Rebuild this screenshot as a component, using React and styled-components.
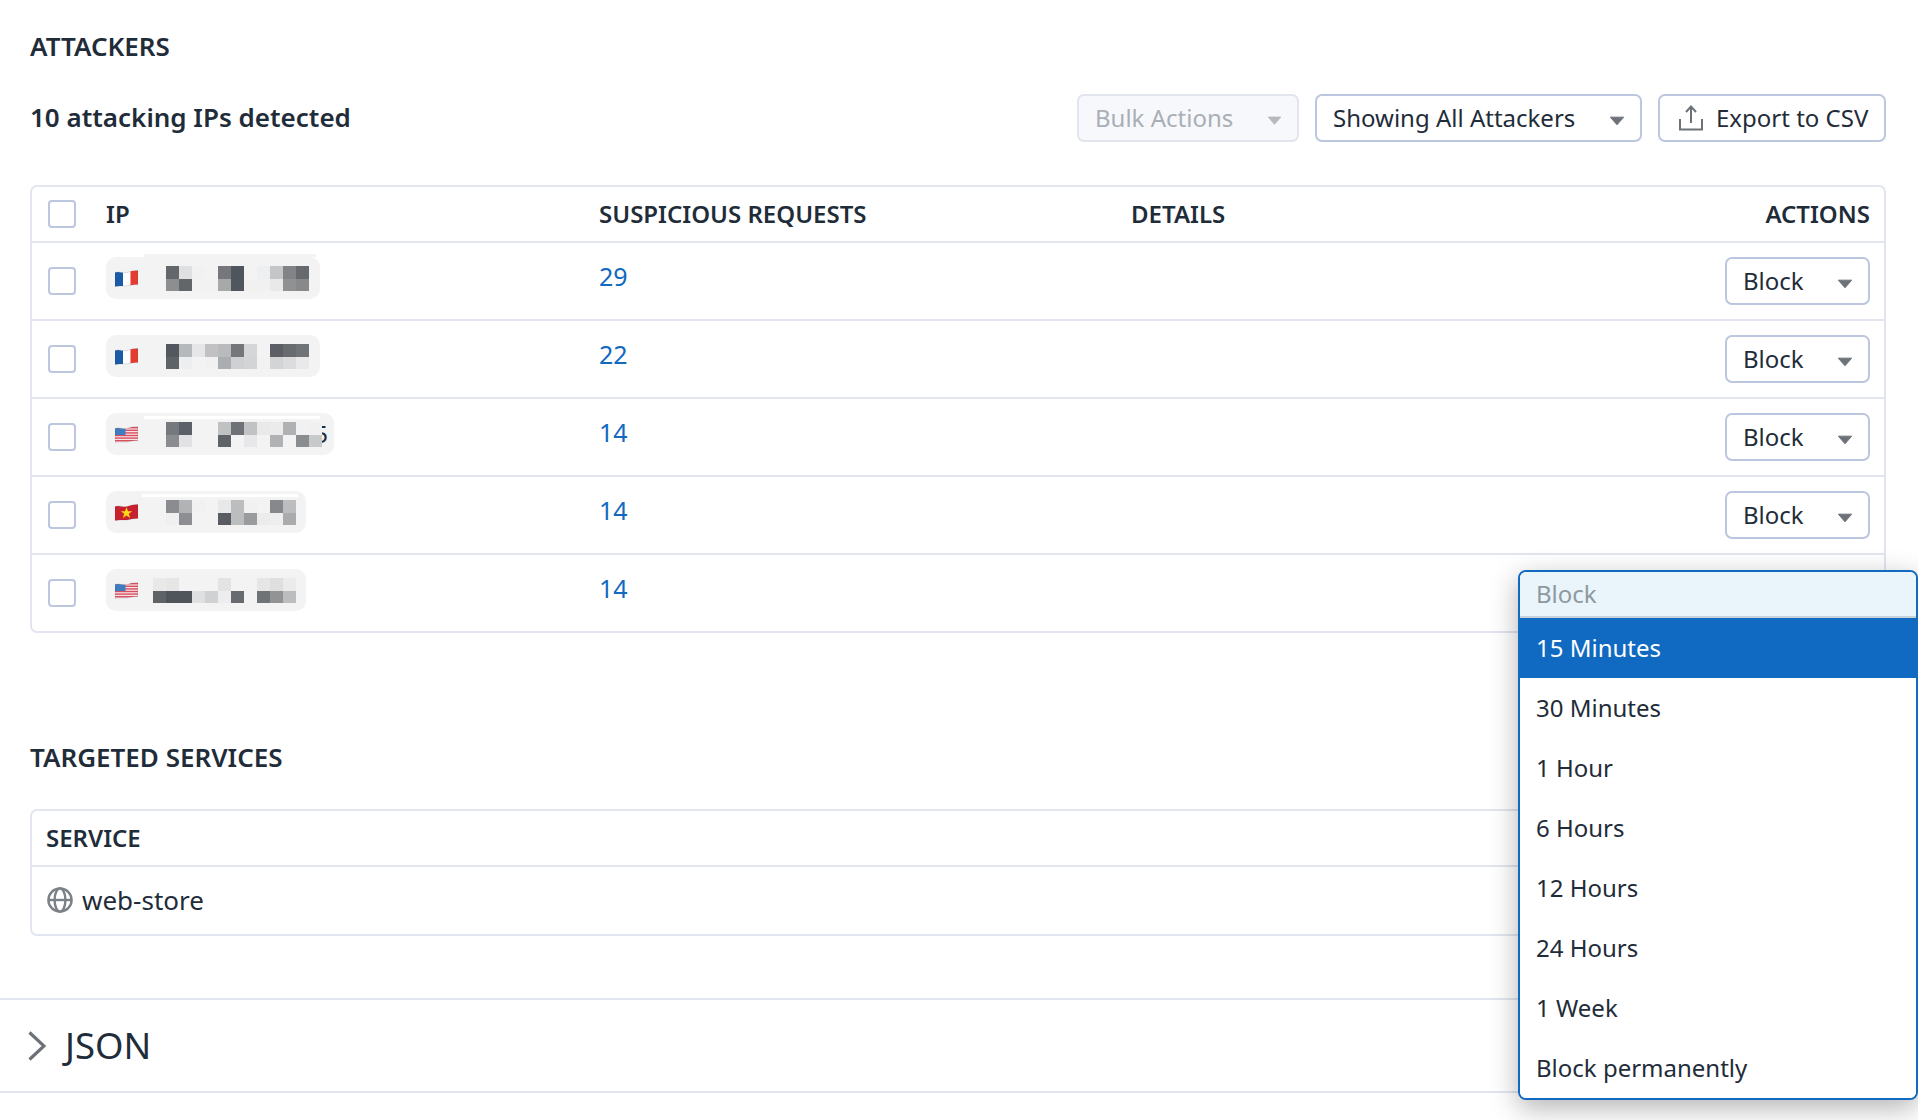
import React from "react";
import styled, { createGlobalStyle } from "styled-components";

const GlobalStyle = createGlobalStyle`
  html, body {
    margin: 0;
    padding: 0;
    background: #fff;
  }
  body {
    font-family: "Noto Sans", "Open Sans", sans-serif;
    color: #1f2c39;
  }
`;

const f = "f3f3f4";

const attackers = [
  {
    flag: "fr",
    count: 29,
    width: 214,
    mosaicGap: 28,
    strip: { top: -3, left: 38, width: 172, color: "#f3f3f4" },
    cells: [
      ["63666a", "dfe0e2", "f1f1f2", f, "75777b", "4f555c", f, "eeeff0", "c5c6c8", "818386", "666a6e"],
      ["8c8e90", "636669", "f2f2f3", "f2f2f3", "a7a8aa", "4f565d", "f1f1f2", "f1f1f2", "e9e9ea", "8f9193", "87898b"],
    ],
  },
  {
    flag: "fr",
    count: 22,
    width: 214,
    mosaicGap: 28,
    cells: [
      ["53585e", "b6b9bb", "e6e6e8", "c1c1c3", "b9babc", "74767a", "d5d6d7", f, "5c5f66", "696b6f", "717476"],
      ["5e6367", "eceef0", f, "f1f1f2", "abaeb0", "cfd0d1", "d3d4d5", "f2f2f3", "d3d4d5", "dcdcde", "e9e9ea"],
    ],
  },
  {
    flag: "us",
    count: 14,
    width: 228,
    mosaicGap: 28,
    tail: "5",
    strip: { top: 3, left: 38, width: 176, color: "#fff" },
    cells: [
      ["75787c", "5c6068", f, f, "c0c1c3", "6e7175", "c1c2c3", "e9e9ea", "ebebec", "b0b1b3", "f1f1f2", "f0f0f1"],
      ["8a8c8f", "e2e2e4", f, f, "5f6266", f, "e7e7e9", f, "b1b2b3", f, "8a8d8f", "c8c9ca"],
    ],
  },
  {
    flag: "vn",
    count: 14,
    width: 200,
    mosaicGap: 28,
    strip: { top: 3, left: 36, width: 156, color: "#fff" },
    cells: [
      ["8a8c8f", "b2b3b5", "f1f1f2", f, "e8e8e9", "bcbdbf", "f1f1f2", f, "86888b", "bcbdbf"],
      ["efeff0", "8c8e91", f, f, "595c63", "bcbdbf", "999b9d", "ececed", "eeeeef", "a9abad"],
    ],
  },
  {
    flag: "us",
    count: 14,
    width: 200,
    mosaicGap: 15,
    cells: [
      ["e9e9ea", "e6e6e7", f, f, f, "e3e3e4", f, f, "e6e6e7", "dfdfe0", "ebebec"],
      ["5f6367", "50555c", "50555c", "dfe0e2", "d0d1d2", "ededee", "676a6e", f, "707376", "919395", "bcbdbf"],
    ],
  },
];

const blockOptions = [
  "15 Minutes",
  "30 Minutes",
  "1 Hour",
  "6 Hours",
  "12 Hours",
  "24 Hours",
  "1 Week",
  "Block permanently",
];

function Caret({ size = 16, color = "#6c7278" }) {
  return (
    <svg width={size} height={size * 0.6} viewBox="0 0 16 10" style={{ flex: "none", marginTop: 5 }}>
      <path d="M1 1.2h14L8 9.2z" fill={color} stroke={color} strokeWidth="1" strokeLinejoin="round" />
    </svg>
  );
}

function ExportIcon() {
  return (
    <svg width="26" height="26" viewBox="0 0 26 26" fill="none" stroke="#6c7278" strokeWidth="2">
      <path d="M13 18V2" />
      <path d="M8 7l5-5.5L18 7" />
      <path d="M2 14v10.5h22V14" />
    </svg>
  );
}

function GlobeIcon() {
  return (
    <svg width="26" height="26" viewBox="0 0 26 26" fill="none" stroke="#7c8186" strokeWidth="2.4">
      <circle cx="13" cy="13" r="11.6" />
      <path d="M1.4 13h23.2" />
      <ellipse cx="13" cy="13" rx="5.4" ry="11.6" />
    </svg>
  );
}

function Chevron() {
  return (
    <svg width="18" height="30" viewBox="0 0 18 30" fill="none" stroke="#6c7278" strokeWidth="3.2">
      <path d="M1.5 1.5L16 15 1.5 28.5" />
    </svg>
  );
}

const wave = "M0 2.5C4 .8 8 3.6 12 2.5S19 .4 23 .6V14.6C19 14.2 16 15.4 12 15.9S4 15.2 0 16.6z";

function Flag({ code, id }) {
  const clip = `flag-${id}`;
  return (
    <svg width="23" height="17" viewBox="0 0 23 17" style={{ flex: "none" }}>
      <clipPath id={clip}>
        <path d={wave} />
      </clipPath>
      <g clipPath={`url(#${clip})`}>
        {code === "fr" && (
          <>
            <rect width="8" height="17" fill="#1b5aa6" />
            <rect x="8" width="7.5" height="17" fill="#fff" />
            <rect x="15.5" width="7.5" height="17" fill="#e43d2f" />
          </>
        )}
        {code === "us" && (
          <>
            <rect width="23" height="17" fill="#f7e3e6" />
            {[1, 3.6, 6.2, 8.8, 11.4, 14].map((y) => (
              <rect key={y} y={y} width="23" height="1.4" fill="#d8505f" />
            ))}
            <rect width="10.5" height="9" fill="#3f7cc0" />
          </>
        )}
        {code === "vn" && (
          <>
            <rect width="23" height="17" fill="#c8202f" />
            <path d="M11.5 3.2l1.5 4h4.2l-3.4 2.6 1.3 4.2-3.6-2.6-3.6 2.6 1.3-4.2-3.4-2.6H10z" fill="#fbd916" />
          </>
        )}
      </g>
      <path d={wave} fill="none" stroke="rgba(60,60,70,.25)" strokeWidth=".6" />
    </svg>
  );
}

function Mosaic({ cells, gap }) {
  const cols = cells[0].length;
  return (
    <svg
      width={cols * 13}
      height="25"
      viewBox={`0 0 ${cols * 13} 25`}
      shapeRendering="crispEdges"
      style={{ marginLeft: gap, flex: "none" }}
    >
      {cells.map((row, r) =>
        row.map((c, i) => <rect key={`${r}-${i}`} x={i * 13} y={r * 12.5} width="13" height="12.5" fill={`#${c}`} />)
      )}
    </svg>
  );
}

function App() {
  return (
    <Page>
      <GlobalStyle />
      <Content>
        <SectionTitle>Attackers</SectionTitle>
        <Toolbar>
          <Count>10 attacking IPs detected</Count>
          <Controls>
            <Select $disabled $width={222}>
              Bulk Actions
              <Caret size={15} color="#b4b9bd" />
            </Select>
            <Select $width={327}>
              Showing All Attackers
              <Caret />
            </Select>
            <ExportButton>
              <ExportIcon />
              Export to CSV
            </ExportButton>
          </Controls>
        </Toolbar>

        <Table>
          <HeadRow>
            <CheckCell>
              <Checkbox />
            </CheckCell>
            <span>IP</span>
            <span>Suspicious Requests</span>
            <span>Details</span>
            <RightCell>Actions</RightCell>
          </HeadRow>
          {attackers.map((a, i) => (
            <Row key={i}>
              <CheckCell $row>
                <Checkbox />
              </CheckCell>
              <Cell>
                <Chip $width={a.width}>
                  {a.strip && <Strip $top={a.strip.top} $left={a.strip.left} $width={a.strip.width} $color={a.strip.color} />}
                  <Flag code={a.flag} id={i} />
                  <Mosaic cells={a.cells} gap={a.mosaicGap} />
                  {a.tail && <Tail>{a.tail}</Tail>}
                </Chip>
              </Cell>
              <Cell>
                <CountLink>{a.count}</CountLink>
              </Cell>
              <Cell />
              <ActionCell>
                {i < 4 && (
                  <Select $width={145}>
                    Block
                    <Caret />
                  </Select>
                )}
              </ActionCell>
            </Row>
          ))}
        </Table>

        <ServicesTitle>Targeted Services</ServicesTitle>
        <ServiceTable>
          <ServiceHead>Service</ServiceHead>
          <ServiceRow>
            <GlobeIcon />
            web-store
          </ServiceRow>
        </ServiceTable>
      </Content>

      <JsonBar>
        <Chevron />
        <JsonLabel>JSON</JsonLabel>
      </JsonBar>

      <Menu>
        <MenuHeader>Block</MenuHeader>
        {blockOptions.map((o, i) => (
          <MenuItem key={o} $active={i === 0}>
            {o}
          </MenuItem>
        ))}
      </Menu>
    </Page>
  );
}

const Page = styled.div`
  position: relative;
  width: 1918px;
  height: 1120px;
  overflow: hidden;
  background: #fff;
  font-size: 24px;
  line-height: 32px;
`;

const Content = styled.div`
  padding: 30px 32px 0 30px;
`;

const SectionTitle = styled.h2`
  margin: 0;
  font-size: 26px;
  line-height: 32px;
  font-weight: 600;
  text-transform: uppercase;
`;

const Toolbar = styled.div`
  display: flex;
  align-items: center;
  justify-content: space-between;
  margin-top: 32px;
  height: 48px;
`;

const Count = styled.div`
  font-size: 26px;
  font-weight: 600;
  margin-top: -2px;
`;

const Controls = styled.div`
  display: flex;
  gap: 16px;
`;

const Select = styled.div`
  box-sizing: border-box;
  display: flex;
  align-items: center;
  justify-content: space-between;
  width: ${(p) => p.$width}px;
  height: 48px;
  padding: 0 15px 0 16px;
  border: 2px solid ${(p) => (p.$disabled ? "#e2e5ed" : "#bcc6de")};
  border-radius: 7px;
  background: ${(p) => (p.$disabled ? "#f7f8fb" : "#fff")};
  color: ${(p) => (p.$disabled ? "#a9afb5" : "#1f2c39")};
`;

const ExportButton = styled.div`
  box-sizing: border-box;
  display: flex;
  align-items: center;
  gap: 12px;
  width: 228px;
  height: 48px;
  padding: 0 0 0 18px;
  border: 2px solid #bcc6de;
  border-radius: 7px;
  white-space: nowrap;
`;

const Table = styled.div`
  margin-top: 43px;
  border: 2px solid #e2e5ef;
  border-radius: 7px;
`;

const columns = "74px 493px 532px 1fr auto";

const HeadRow = styled.div`
  display: grid;
  grid-template-columns: ${columns};
  align-items: center;
  height: 54px;
  padding-right: 14px;
  border-bottom: 2px solid #e2e5ef;
  font-weight: 600;
  font-size: 24px;
  text-transform: uppercase;
`;

const Row = styled.div`
  display: grid;
  grid-template-columns: ${columns};
  box-sizing: border-box;
  height: 78px;
  padding-right: 14px;
  border-bottom: 2px solid #e2e5ef;
  &:last-child {
    height: 76px;
    border-bottom: none;
  }
`;

const CheckCell = styled.div`
  display: flex;
  padding: ${(p) => (p.$row ? "24px" : "0")} 0 0 16px;
`;

const Checkbox = styled.div`
  box-sizing: border-box;
  width: 28px;
  height: 28px;
  border: 2.5px solid #bcc6de;
  border-radius: 4px;
  background: #fff;
`;

const RightCell = styled.span`
  text-align: right;
`;

const Cell = styled.div`
  padding-top: 14px;
`;

const Chip = styled.div`
  position: relative;
  box-sizing: border-box;
  display: flex;
  align-items: center;
  width: ${(p) => p.$width}px;
  height: 42px;
  padding-left: 9px;
  border-radius: 10px;
  background: #f3f3f4;
`;

const Strip = styled.span`
  position: absolute;
  top: ${(p) => p.$top}px;
  left: ${(p) => p.$left}px;
  width: ${(p) => p.$width}px;
  height: 3px;
  background: ${(p) => p.$color};
`;

const Tail = styled.span`
  width: 6px;
  overflow: hidden;
  direction: rtl;
  font-size: 24px;
`;

const CountLink = styled.span`
  display: block;
  line-height: 38px;
  font-size: 25px;
  color: #1169c0;
`;

const ActionCell = styled.div`
  display: flex;
  justify-content: flex-end;
  padding-top: 14px;
`;

const ServicesTitle = styled(SectionTitle)`
  margin-top: 108px;
`;

const ServiceTable = styled.div`
  margin-top: 36px;
  border: 2px solid #e2e5ef;
  border-radius: 7px;
`;

const ServiceHead = styled.div`
  display: flex;
  align-items: center;
  height: 54px;
  padding-left: 14px;
  border-bottom: 2px solid #e2e5ef;
  font-weight: 600;
  font-size: 24px;
  text-transform: uppercase;
`;

const ServiceRow = styled.div`
  box-sizing: border-box;
  display: flex;
  align-items: center;
  gap: 9px;
  height: 67px;
  padding: 0 0 2px 15px;
  font-size: 26px;
`;

const JsonBar = styled.div`
  display: flex;
  align-items: center;
  gap: 19px;
  margin-top: 62px;
  height: 91px;
  padding-left: 28px;
  border-top: 2px solid #e2e5ef;
  border-bottom: 2px solid #e2e5ef;
`;

const JsonLabel = styled.span`
  font-size: 36.5px;
  line-height: 44px;
  margin-top: -2px;
`;

const Menu = styled.div`
  position: absolute;
  top: 570px;
  left: 1518px;
  box-sizing: border-box;
  width: 400px;
  height: 530px;
  overflow: hidden;
  border: 2px solid #1169c0;
  border-radius: 8px;
  background: #fff;
  box-shadow: 0 8px 28px rgba(0, 0, 0, 0.3);
`;

const MenuHeader = styled.div`
  box-sizing: border-box;
  display: flex;
  align-items: center;
  height: 46px;
  padding-left: 16px;
  background: #eaf4fb;
  border-bottom: 2px solid #c9d1d9;
  color: #8d999f;
`;

const MenuItem = styled.div`
  display: flex;
  align-items: center;
  height: 60px;
  padding-left: 16px;
  background: ${(p) => (p.$active ? "#116ac1" : "#fff")};
  color: ${(p) => (p.$active ? "#fff" : "#1f2c39")};
`;

export default App;
